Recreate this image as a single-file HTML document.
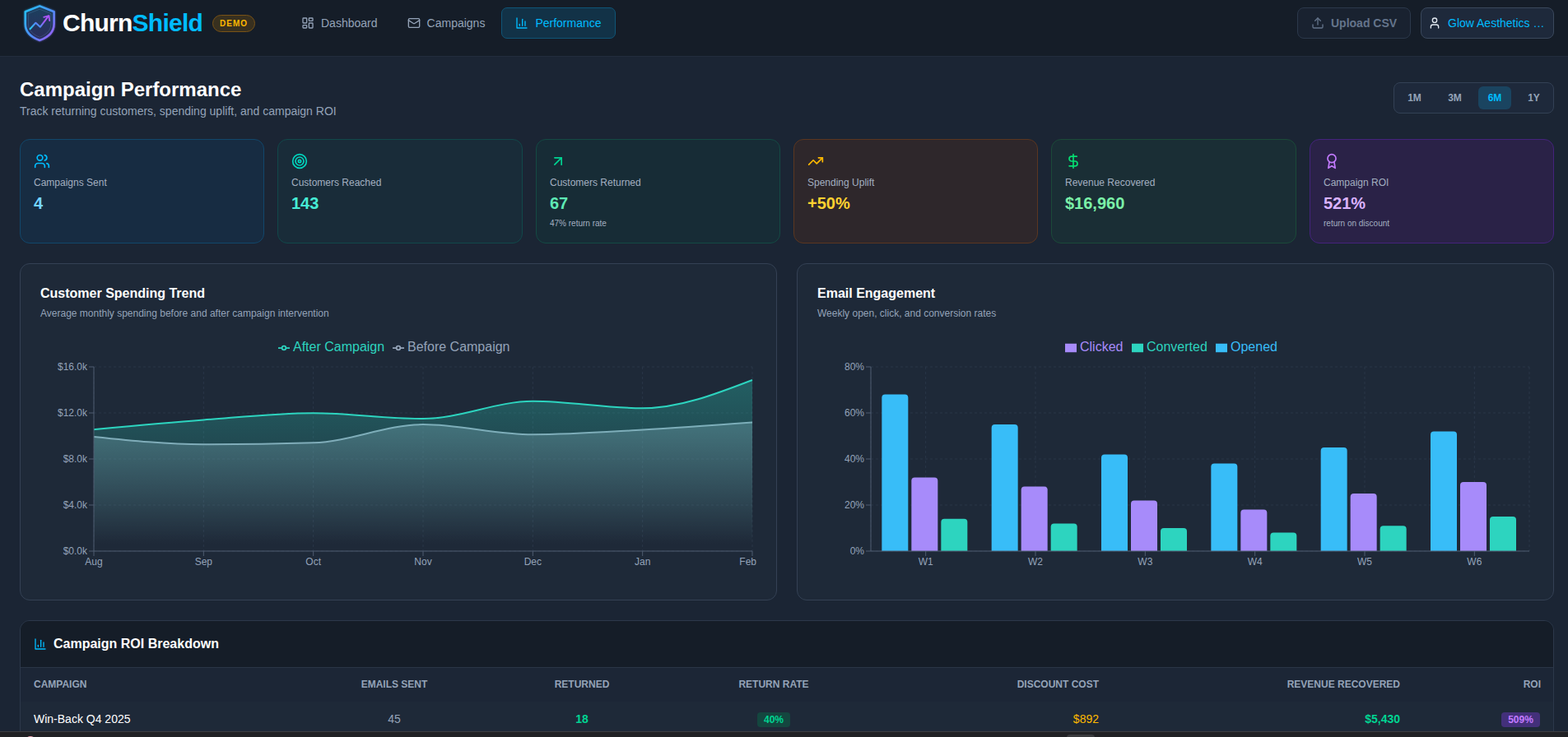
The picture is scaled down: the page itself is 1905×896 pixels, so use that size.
<!DOCTYPE html>
<html lang="en">
<head>
<meta charset="utf-8">
<title>ChurnShield - Campaign Performance</title>
<style>
*{box-sizing:border-box;margin:0;padding:0}
html,body{width:1905px;height:896px;overflow:hidden;background:#1b2534}
body{font-family:"Liberation Sans",Arial,sans-serif;color:#fff;position:relative;-webkit-font-smoothing:auto}
.abs{position:absolute}
svg{display:block}
/* header */
#hdr{position:absolute;left:0;top:0;width:1905px;height:69px;background:#151d28;border-bottom:1px solid #222d3d}
#logo{position:absolute;left:20px;top:0}
#brand{position:absolute;left:76px;top:10px;font-size:30px;line-height:36px;font-weight:700;letter-spacing:-0.75px;white-space:nowrap;color:#fff}
#brand b{color:#00bcff;font-weight:700}
#demo{position:absolute;left:258px;top:18px;width:52px;height:21px;border:1px solid #7a5316;background:#38301f;border-radius:11px;color:#ffb900;font-size:10px;font-weight:700;letter-spacing:1px;line-height:19px;text-align:center}
.nav{position:absolute;top:9px;height:38px;font-size:14px;line-height:38px;color:#94a3b8;white-space:nowrap}
.nav svg{position:absolute;top:11px}
.nav.on{border:1px solid #0f5577;background:#123247;border-radius:7px;color:#00bcff}
.btn{position:absolute;top:9px;height:38px;border-radius:8px;font-size:14px;line-height:36px;white-space:nowrap}
#up{left:1576px;width:138px;border:1px solid #2b384b;background:#192230;color:#64748b;font-weight:700}
#acct{left:1726px;width:162px;border:1px solid #3a485c;background:#1e293b;color:#00bcff}
/* title */
#ttl{position:absolute;left:24px;top:93px;font-size:24px;line-height:32px;font-weight:700;white-space:nowrap}
#sub{position:absolute;left:24px;top:125px;font-size:14px;line-height:20px;color:#94a3b8;white-space:nowrap}
#rng{position:absolute;left:1693px;top:100px;width:195px;height:38px;border:1px solid #334155;background:#1e293b;border-radius:8px}
#rng span{position:absolute;top:4px;height:28px;line-height:28px;font-size:12px;font-weight:700;color:#94a3b8;text-align:center;border-radius:6px}
#rng span.on{background:#1a4460;color:#00bcff}
/* stat cards */
.sc{position:absolute;top:169px;width:297.4px;height:127px;border-radius:12px;border:1px solid;padding:16px}
.sc svg{width:20px;height:20px}
.sc .l{margin-top:8px;font-size:12px;line-height:16px;color:#a3afc0;white-space:nowrap}
.sc .v{margin-top:3px;font-size:20px;line-height:28px;font-weight:700;white-space:nowrap}
.sc .s{margin-top:3px;font-size:10px;line-height:15px;color:#a3afc0;white-space:nowrap}
/* chart cards */
.cc{position:absolute;top:320px;width:920px;height:410px;border-radius:12px;border:1px solid #344154;background:#1e2938}
.cc h3{position:absolute;left:24px;top:24px;font-size:16px;line-height:24px;font-weight:700;white-space:nowrap}
.cc p{position:absolute;left:24px;top:52px;font-size:12px;line-height:16px;color:#94a3b8;white-space:nowrap}
.lg{position:absolute;top:410px;height:24px;line-height:24px;font-size:16px;white-space:nowrap}
.lg svg{position:absolute}
/* table */
#tb{position:absolute;left:24px;top:754px;width:1864px;height:160px;border-radius:12px;border:1px solid #2c384a;background:#1e2938;overflow:hidden}
#tbh{position:absolute;left:0;top:0;width:100%;height:57px;background:#151d28;border-bottom:1px solid #2a3546}
#tbh svg{position:absolute;left:16px;top:20px}
#tbh span{position:absolute;left:40px;top:16px;font-size:16px;line-height:24px;font-weight:700;white-space:nowrap}
#tbc{position:absolute;left:0;top:57px;width:100%;height:41px;background:#1c2636}
.th{position:absolute;top:69px;font-size:12px;line-height:16px;font-weight:700;color:#94a3b8;white-space:nowrap}
.td{position:absolute;top:109px;font-size:14px;line-height:20px;white-space:nowrap}
.pill{position:absolute;top:111px;height:18px;border-radius:4px;font-size:12px;line-height:18px;font-weight:700;text-align:center}
#bot{position:absolute;left:0;top:889px;width:1905px;height:7px;background:#202124;border-top:1px solid #3c3d40}

</style>
</head>
<body>
<div id="hdr">
  <svg id="logo" width="60" height="56" viewBox="0 0 60 56">
    <defs>
      <linearGradient id="lg1" x1="0" y1="0" x2="1" y2="1"><stop offset="0" stop-color="#22c3f6"/><stop offset="0.55" stop-color="#4f8df8"/><stop offset="1" stop-color="#a855f7"/></linearGradient>
      <linearGradient id="lg2" x1="0" y1="0" x2="0" y2="1"><stop offset="0" stop-color="#1b415f"/><stop offset="1" stop-color="#2c2c5a"/></linearGradient>
      <linearGradient id="lg3" x1="0" y1="1" x2="1" y2="0"><stop offset="0" stop-color="#22d3ee"/><stop offset="0.35" stop-color="#4f8df8"/><stop offset="0.7" stop-color="#a855f7"/><stop offset="1" stop-color="#b45cf8"/></linearGradient>
      <filter id="glow" x="-30%" y="-30%" width="160%" height="160%"><feGaussianBlur stdDeviation="1.2"/></filter>
    </defs>
    <path d="M28.2 7.4 L45.6 14.2 V29 C45.6 38.6 38.3 45.4 28.2 49 C18.1 45.4 10.8 38.6 10.8 29 V14.2 Z" fill="none" stroke="url(#lg1)" stroke-width="3" stroke-linejoin="round" opacity="0.5" filter="url(#glow)"/>
    <path d="M28.2 7.4 L45.6 14.2 V29 C45.6 38.6 38.3 45.4 28.2 49 C18.1 45.4 10.8 38.6 10.8 29 V14.2 Z" fill="url(#lg2)" stroke="url(#lg1)" stroke-width="2.6" stroke-linejoin="round"/>
    <path d="M28.2 11.2 L42 16.6 V29 C42 36.6 36.2 42.2 28.2 45.2 C20.2 42.2 14.4 36.6 14.4 29 V16.6 Z" fill="none" stroke="#7fb6e8" stroke-opacity="0.28" stroke-width="0.7" stroke-linejoin="round"/>
    <path d="M16.5 35.3 L23.4 27.8 L28.8 32.8 L38.8 19.6" fill="none" stroke="url(#lg3)" stroke-width="2" stroke-linecap="round" stroke-linejoin="round"/>
    <path d="M33.2 20.8 L39.5 19.1 L40.2 25" fill="none" stroke="#a855f7" stroke-width="1.9" stroke-linecap="round" stroke-linejoin="round"/>
  </svg>
  <div id="brand">Churn<b>Shield</b></div>
  <div id="demo">DEMO</div>

  <div class="nav" style="left:366px;width:100px"><svg style="left:0" width="16" height="16" viewBox="0 0 24 24" fill="none" stroke="#94a3b8" stroke-width="2" stroke-linecap="round" stroke-linejoin="round"><rect width="7" height="9" x="3" y="3" rx="1"/><rect width="7" height="5" x="14" y="3" rx="1"/><rect width="7" height="9" x="14" y="12" rx="1"/><rect width="7" height="5" x="3" y="16" rx="1"/></svg><span style="position:absolute;left:24px">Dashboard</span></div>
  <div class="nav" style="left:495px;width:100px"><svg style="left:0" width="16" height="16" viewBox="0 0 24 24" fill="none" stroke="#94a3b8" stroke-width="2" stroke-linecap="round" stroke-linejoin="round"><rect width="20" height="16" x="2" y="4" rx="2"/><path d="m22 7-8.97 5.7a1.94 1.94 0 0 1-2.06 0L2 7"/></svg><span style="position:absolute;left:23.6px">Campaigns</span></div>
  <div class="nav on" style="left:609px;width:139px;line-height:36px"><svg style="left:16px;top:10px" width="16" height="16" viewBox="0 0 24 24" fill="none" stroke="#00bcff" stroke-width="2" stroke-linecap="round" stroke-linejoin="round"><path d="M3 3v18h18"/><path d="M18 17V9"/><path d="M13 17V5"/><path d="M8 17v-3"/></svg><span style="position:absolute;left:40.4px">Performance</span></div>

  <div class="btn" id="up"><svg class="abs" style="left:16px;top:10px" width="16" height="16" viewBox="0 0 24 24" fill="none" stroke="#64748b" stroke-width="2" stroke-linecap="round" stroke-linejoin="round"><path d="M21 15v4a2 2 0 0 1-2 2H5a2 2 0 0 1-2-2v-4"/><polyline points="17 8 12 3 7 8"/><line x1="12" x2="12" y1="3" y2="15"/></svg><span class="abs" style="left:40px">Upload CSV</span></div>
  <div class="btn" id="acct"><svg class="abs" style="left:8px;top:10px" width="16" height="16" viewBox="0 0 24 24" fill="none" stroke="#e2e8f0" stroke-width="2" stroke-linecap="round" stroke-linejoin="round"><path d="M19 21v-2a4 4 0 0 0-4-4H9a4 4 0 0 0-4 4v2"/><circle cx="12" cy="7" r="4"/></svg><span class="abs" style="left:32px">Glow Aesthetics …</span></div>
</div>

<div id="ttl">Campaign Performance</div>
<div id="sub">Track returning customers, spending uplift, and campaign ROI</div>
<div id="rng"><span style="left:4px;width:41px">1M</span><span style="left:53px;width:41px">3M</span><span class="on" style="left:102px;width:40px">6M</span><span style="left:150px;width:39px">1Y</span></div>

<div class="sc" style="left:24px;width:297px;background:#172c42;border-color:#12476b">
  <svg viewBox="0 0 24 24" fill="none" stroke="#00bcff" stroke-width="2" stroke-linecap="round" stroke-linejoin="round"><path d="M16 21v-2a4 4 0 0 0-4-4H6a4 4 0 0 0-4 4v2"/><circle cx="9" cy="7" r="4"/><path d="M22 21v-2a4 4 0 0 0-3-3.87"/><path d="M16 3.13a4 4 0 0 1 0 7.75"/></svg>
  <div class="l">Campaigns Sent</div><div class="v" style="color:#74d4ff">4</div>
</div>
<div class="sc" style="left:337px;width:298px;background:#192c39;border-color:#11484a">
  <svg viewBox="0 0 24 24" fill="none" stroke="#00d5be" stroke-width="2" stroke-linecap="round" stroke-linejoin="round"><circle cx="12" cy="12" r="10"/><circle cx="12" cy="12" r="6"/><circle cx="12" cy="12" r="2"/></svg>
  <div class="l">Customers Reached</div><div class="v" style="color:#46ecd5">143</div>
</div>
<div class="sc" style="left:651px;width:297px;background:#172c36;border-color:#144a44">
  <svg viewBox="0 0 24 24" fill="none" stroke="#00d492" stroke-width="2" stroke-linecap="round" stroke-linejoin="round"><path d="M7 7h10v10"/><path d="M7 17 17 7"/></svg>
  <div class="l">Customers Returned</div><div class="v" style="color:#5ee9b5">67</div><div class="s">47% return rate</div>
</div>
<div class="sc" style="left:964px;width:297px;background:#2e272b;border-color:#5b3620">
  <svg viewBox="0 0 24 24" fill="none" stroke="#ffb900" stroke-width="2" stroke-linecap="round" stroke-linejoin="round"><polyline points="22 7 13.5 15.5 8.5 10.5 2 17"/><polyline points="16 7 22 7 22 13"/></svg>
  <div class="l">Spending Uplift</div><div class="v" style="color:#ffd230">+50%</div>
</div>
<div class="sc" style="left:1277px;width:298px;background:#1a2e35;border-color:#1b4a39">
  <svg viewBox="0 0 24 24" fill="none" stroke="#05df72" stroke-width="2" stroke-linecap="round" stroke-linejoin="round"><line x1="12" x2="12" y1="2" y2="22"/><path d="M17 5H9.5a3.5 3.5 0 0 0 0 7h5a3.5 3.5 0 0 1 0 7H6"/></svg>
  <div class="l">Revenue Recovered</div><div class="v" style="color:#7bf1a8">$16,960</div>
</div>
<div class="sc" style="left:1591px;width:297px;background:#2a2247;border-color:#44237c">
  <svg viewBox="0 0 24 24" fill="none" stroke="#c27aff" stroke-width="2" stroke-linecap="round" stroke-linejoin="round"><circle cx="12" cy="8" r="6"/><path d="M15.477 12.89 17 22l-5-3-5 3 1.523-9.11"/></svg>
  <div class="l">Campaign ROI</div><div class="v" style="color:#dab2ff">521%</div><div class="s">return on discount</div>
</div>

<div class="cc" style="left:24px"><h3>Customer Spending Trend</h3><p>Average monthly spending before and after campaign intervention</p></div>
<div class="cc" style="left:968px"><h3>Email Engagement</h3><p>Weekly open, click, and conversion rates</p></div>

<svg class="chart" width="1905" height="760" viewBox="0 0 1905 760" style="position:absolute;left:0;top:0">
<defs><linearGradient id="gA" x1="0" y1="0" x2="0" y2="1"><stop offset="5%" stop-color="#2dd4bf" stop-opacity="0.3"/><stop offset="95%" stop-color="#2dd4bf" stop-opacity="0"/></linearGradient><linearGradient id="gB" x1="0" y1="0" x2="0" y2="1"><stop offset="5%" stop-color="#94a3b8" stop-opacity="0.35"/><stop offset="95%" stop-color="#94a3b8" stop-opacity="0"/></linearGradient></defs>
<g stroke="#334155" stroke-opacity="0.55" stroke-dasharray="3 3" fill="none">
<line x1="114" y1="446" x2="914" y2="446"/>
<line x1="114" y1="502" x2="914" y2="502"/>
<line x1="114" y1="558" x2="914" y2="558"/>
<line x1="114" y1="614" x2="914" y2="614"/>
<line x1="114" y1="670" x2="914" y2="670"/>
<line x1="114.00" y1="446" x2="114.00" y2="670"/>
<line x1="247.33" y1="446" x2="247.33" y2="670"/>
<line x1="380.67" y1="446" x2="380.67" y2="670"/>
<line x1="514.00" y1="446" x2="514.00" y2="670"/>
<line x1="647.33" y1="446" x2="647.33" y2="670"/>
<line x1="780.67" y1="446" x2="780.67" y2="670"/>
<line x1="914.00" y1="446" x2="914.00" y2="670"/>
</g>
<path d="M114.00,530.90C158.44,535.55,202.89,540.20,247.33,540.20C291.78,540.20,336.22,539.53,380.67,538.20C425.11,536.87,469.56,516.10,514.00,516.10C558.44,516.10,602.89,528.30,647.33,528.30C691.78,528.30,736.22,525.05,780.67,522.60C825.11,520.15,869.56,516.88,914.00,513.60L914.00,670.00 L114.00,670.00 Z" fill="url(#gB)" stroke="none"/>
<path d="M114.00,530.90C158.44,535.55,202.89,540.20,247.33,540.20C291.78,540.20,336.22,539.53,380.67,538.20C425.11,536.87,469.56,516.10,514.00,516.10C558.44,516.10,602.89,528.30,647.33,528.30C691.78,528.30,736.22,525.05,780.67,522.60C825.11,520.15,869.56,516.88,914.00,513.60" fill="none" stroke="#94a3b8" stroke-width="2"/>
<path d="M114.00,522.20C158.44,518.02,202.89,513.83,247.33,510.50C291.78,507.17,336.22,502.20,380.67,502.20C425.11,502.20,469.56,509.10,514.00,509.10C558.44,509.10,602.89,487.80,647.33,487.80C691.78,487.80,736.22,496.30,780.67,496.30C825.11,496.30,869.56,479.15,914.00,462.00L914.00,670.00 L114.00,670.00 Z" fill="url(#gA)" stroke="none"/>
<path d="M114.00,522.20C158.44,518.02,202.89,513.83,247.33,510.50C291.78,507.17,336.22,502.20,380.67,502.20C425.11,502.20,469.56,509.10,514.00,509.10C558.44,509.10,602.89,487.80,647.33,487.80C691.78,487.80,736.22,496.30,780.67,496.30C825.11,496.30,869.56,479.15,914.00,462.00" fill="none" stroke="#2dd4bf" stroke-width="2"/>
<g stroke="#4f5c70" fill="none">
<line x1="114" y1="670" x2="914" y2="670"/>
<line x1="114" y1="446" x2="114" y2="670"/>
<line x1="114.00" y1="670" x2="114.00" y2="676"/>
<line x1="247.33" y1="670" x2="247.33" y2="676"/>
<line x1="380.67" y1="670" x2="380.67" y2="676"/>
<line x1="514.00" y1="670" x2="514.00" y2="676"/>
<line x1="647.33" y1="670" x2="647.33" y2="676"/>
<line x1="780.67" y1="670" x2="780.67" y2="676"/>
<line x1="914.00" y1="670" x2="914.00" y2="676"/>
<line x1="108" y1="446" x2="114" y2="446"/>
<line x1="108" y1="502" x2="114" y2="502"/>
<line x1="108" y1="558" x2="114" y2="558"/>
<line x1="108" y1="614" x2="114" y2="614"/>
<line x1="108" y1="670" x2="114" y2="670"/>
</g>
<g fill="#94a3b8" font-size="12" font-family="Liberation Sans, Arial, sans-serif">
<text x="106" y="450.2" text-anchor="end">$16.0k</text>
<text x="106" y="506.2" text-anchor="end">$12.0k</text>
<text x="106" y="562.2" text-anchor="end">$8.0k</text>
<text x="106" y="618.2" text-anchor="end">$4.0k</text>
<text x="106" y="674.2" text-anchor="end">$0.0k</text>
<text x="114.00" y="687" text-anchor="middle">Aug</text>
<text x="247.33" y="687" text-anchor="middle">Sep</text>
<text x="380.67" y="687" text-anchor="middle">Oct</text>
<text x="514.00" y="687" text-anchor="middle">Nov</text>
<text x="647.33" y="687" text-anchor="middle">Dec</text>
<text x="780.67" y="687" text-anchor="middle">Jan</text>
<text x="919" y="687" text-anchor="end">Feb</text>
</g>
<g stroke="#334155" stroke-opacity="0.55" stroke-dasharray="3 3" fill="none">
<line x1="1058" y1="446" x2="1858" y2="446"/>
<line x1="1058" y1="502" x2="1858" y2="502"/>
<line x1="1058" y1="558" x2="1858" y2="558"/>
<line x1="1058" y1="614" x2="1858" y2="614"/>
<line x1="1058" y1="670" x2="1858" y2="670"/>
<line x1="1124.67" y1="446" x2="1124.67" y2="670"/>
<line x1="1258.00" y1="446" x2="1258.00" y2="670"/>
<line x1="1391.33" y1="446" x2="1391.33" y2="670"/>
<line x1="1524.67" y1="446" x2="1524.67" y2="670"/>
<line x1="1658.00" y1="446" x2="1658.00" y2="670"/>
<line x1="1791.33" y1="446" x2="1791.33" y2="670"/>
<line x1="1058" y1="446" x2="1058" y2="670"/>
<line x1="1858" y1="446" x2="1858" y2="670"/>
</g>
<path d="M1071.33,670.00 v-186.40 a4,4 0 0 1 4,-4 h24 a4,4 0 0 1 4,4 v186.40 z" fill="#38bdf8"/>
<path d="M1107.33,670.00 v-85.60 a4,4 0 0 1 4,-4 h24 a4,4 0 0 1 4,4 v85.60 z" fill="#a78bfa"/>
<path d="M1143.33,670.00 v-35.20 a4,4 0 0 1 4,-4 h24 a4,4 0 0 1 4,4 v35.20 z" fill="#2dd4bf"/>
<path d="M1204.67,670.00 v-150.00 a4,4 0 0 1 4,-4 h24 a4,4 0 0 1 4,4 v150.00 z" fill="#38bdf8"/>
<path d="M1240.67,670.00 v-74.40 a4,4 0 0 1 4,-4 h24 a4,4 0 0 1 4,4 v74.40 z" fill="#a78bfa"/>
<path d="M1276.67,670.00 v-29.60 a4,4 0 0 1 4,-4 h24 a4,4 0 0 1 4,4 v29.60 z" fill="#2dd4bf"/>
<path d="M1338.00,670.00 v-113.60 a4,4 0 0 1 4,-4 h24 a4,4 0 0 1 4,4 v113.60 z" fill="#38bdf8"/>
<path d="M1374.00,670.00 v-57.60 a4,4 0 0 1 4,-4 h24 a4,4 0 0 1 4,4 v57.60 z" fill="#a78bfa"/>
<path d="M1410.00,670.00 v-24.00 a4,4 0 0 1 4,-4 h24 a4,4 0 0 1 4,4 v24.00 z" fill="#2dd4bf"/>
<path d="M1471.33,670.00 v-102.40 a4,4 0 0 1 4,-4 h24 a4,4 0 0 1 4,4 v102.40 z" fill="#38bdf8"/>
<path d="M1507.33,670.00 v-46.40 a4,4 0 0 1 4,-4 h24 a4,4 0 0 1 4,4 v46.40 z" fill="#a78bfa"/>
<path d="M1543.33,670.00 v-18.40 a4,4 0 0 1 4,-4 h24 a4,4 0 0 1 4,4 v18.40 z" fill="#2dd4bf"/>
<path d="M1604.67,670.00 v-122.00 a4,4 0 0 1 4,-4 h24 a4,4 0 0 1 4,4 v122.00 z" fill="#38bdf8"/>
<path d="M1640.67,670.00 v-66.00 a4,4 0 0 1 4,-4 h24 a4,4 0 0 1 4,4 v66.00 z" fill="#a78bfa"/>
<path d="M1676.67,670.00 v-26.80 a4,4 0 0 1 4,-4 h24 a4,4 0 0 1 4,4 v26.80 z" fill="#2dd4bf"/>
<path d="M1738.00,670.00 v-141.60 a4,4 0 0 1 4,-4 h24 a4,4 0 0 1 4,4 v141.60 z" fill="#38bdf8"/>
<path d="M1774.00,670.00 v-80.00 a4,4 0 0 1 4,-4 h24 a4,4 0 0 1 4,4 v80.00 z" fill="#a78bfa"/>
<path d="M1810.00,670.00 v-38.00 a4,4 0 0 1 4,-4 h24 a4,4 0 0 1 4,4 v38.00 z" fill="#2dd4bf"/>
<g stroke="#4f5c70" fill="none">
<line x1="1058" y1="670" x2="1858" y2="670"/>
<line x1="1058" y1="446" x2="1058" y2="670"/>
<line x1="1124.67" y1="670" x2="1124.67" y2="676"/>
<line x1="1258.00" y1="670" x2="1258.00" y2="676"/>
<line x1="1391.33" y1="670" x2="1391.33" y2="676"/>
<line x1="1524.67" y1="670" x2="1524.67" y2="676"/>
<line x1="1658.00" y1="670" x2="1658.00" y2="676"/>
<line x1="1791.33" y1="670" x2="1791.33" y2="676"/>
<line x1="1052" y1="446" x2="1058" y2="446"/>
<line x1="1052" y1="502" x2="1058" y2="502"/>
<line x1="1052" y1="558" x2="1058" y2="558"/>
<line x1="1052" y1="614" x2="1058" y2="614"/>
<line x1="1052" y1="670" x2="1058" y2="670"/>
</g>
<g fill="#94a3b8" font-size="12" font-family="Liberation Sans, Arial, sans-serif">
<text x="1050" y="450.2" text-anchor="end">80%</text>
<text x="1050" y="506.2" text-anchor="end">60%</text>
<text x="1050" y="562.2" text-anchor="end">40%</text>
<text x="1050" y="618.2" text-anchor="end">20%</text>
<text x="1050" y="674.2" text-anchor="end">0%</text>
<text x="1124.67" y="687" text-anchor="middle">W1</text>
<text x="1258.00" y="687" text-anchor="middle">W2</text>
<text x="1391.33" y="687" text-anchor="middle">W3</text>
<text x="1524.67" y="687" text-anchor="middle">W4</text>
<text x="1658.00" y="687" text-anchor="middle">W5</text>
<text x="1791.33" y="687" text-anchor="middle">W6</text>
</g>
</svg>

<div class="lg" style="left:338px;color:#2dd4bf"><svg style="left:0;top:6px" width="14" height="14" viewBox="0 0 32 32"><path stroke-width="4" fill="none" stroke="#2dd4bf" d="M0,16h10.666666666666666A5.333333333333333,5.333333333333333,0,1,1,21.333333333333332,16H32M21.333333333333332,16A5.333333333333333,5.333333333333333,0,1,1,10.666666666666666,16"/></svg><span class="abs" style="left:18px">After Campaign</span></div>
<div class="lg" style="left:477px;color:#94a3b8"><svg style="left:0;top:6px" width="14" height="14" viewBox="0 0 32 32"><path stroke-width="4" fill="none" stroke="#94a3b8" d="M0,16h10.666666666666666A5.333333333333333,5.333333333333333,0,1,1,21.333333333333332,16H32M21.333333333333332,16A5.333333333333333,5.333333333333333,0,1,1,10.666666666666666,16"/></svg><span class="abs" style="left:18px">Before Campaign</span></div>

<div class="lg" style="left:1294px;color:#a78bfa"><svg style="left:0;top:6px" width="14" height="14" viewBox="0 0 32 32"><path stroke="none" fill="#a78bfa" d="M0,4h32v24h-32z"/></svg><span class="abs" style="left:18px">Clicked</span></div>
<div class="lg" style="left:1375px;color:#2dd4bf"><svg style="left:0;top:6px" width="14" height="14" viewBox="0 0 32 32"><path stroke="none" fill="#2dd4bf" d="M0,4h32v24h-32z"/></svg><span class="abs" style="left:18px">Converted</span></div>
<div class="lg" style="left:1477px;color:#38bdf8"><svg style="left:0;top:6px" width="14" height="14" viewBox="0 0 32 32"><path stroke="none" fill="#38bdf8" d="M0,4h32v24h-32z"/></svg><span class="abs" style="left:18px">Opened</span></div>

<div id="tb">
  <div id="tbh"><svg width="16" height="16" viewBox="0 0 24 24" fill="none" stroke="#00bcff" stroke-width="2" stroke-linecap="round" stroke-linejoin="round"><path d="M3 3v18h18"/><path d="M18 17V9"/><path d="M13 17V5"/><path d="M8 17v-3"/></svg><span>Campaign ROI Breakdown</span></div>
  <div id="tbc"></div>
  <div class="th" style="left:16px">CAMPAIGN</div>
  <div class="th" style="left:354px;width:200px;text-align:center">EMAILS SENT</div>
  <div class="th" style="left:582px;width:200px;text-align:center">RETURNED</div>
  <div class="th" style="left:815px;width:200px;text-align:center">RETURN RATE</div>
  <div class="th" style="left:1010px;width:300px;text-align:right">DISCOUNT COST</div>
  <div class="th" style="left:1376px;width:300px;text-align:right">REVENUE RECOVERED</div>
  <div class="th" style="left:1547px;width:300px;text-align:right">ROI</div>
  <div class="td" style="left:16px;color:#fff">Win-Back Q4 2025</div>
  <div class="td" style="left:354px;width:200px;text-align:center;color:#94a3b8">45</div>
  <div class="td" style="left:582px;width:200px;text-align:center;color:#00d492;font-weight:700">18</div>
  <div class="pill" style="left:895px;width:40px;background:#14463f;color:#00d492">40%</div>
  <div class="td" style="left:1010px;width:300px;text-align:right;color:#ffb900">$892</div>
  <div class="td" style="left:1376px;width:300px;text-align:right;color:#00d492;font-weight:700">$5,430</div>
  <div class="pill" style="left:1799px;width:47px;background:#43307a;color:#c27aff">509%</div>
</div>
<div id="bot"><div class="abs" style="left:30px;top:5px;width:14px;height:14px;border-radius:7px;background:#f4a6b4"></div><div class="abs" style="left:1296px;top:3px;width:34px;height:10px;border-radius:4px;background:#3a3b3e"></div></div>

</body>
</html>
